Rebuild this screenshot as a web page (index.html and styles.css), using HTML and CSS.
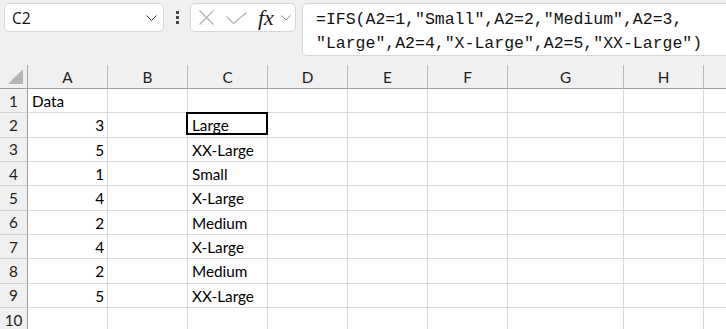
FILE: index.html
```html
<!DOCTYPE html>
<html lang="en">
<head>
    <meta charset="UTF-8">
    <title>IFS</title>
    <link rel="stylesheet" href="styles.css">
</head>
<body>
<div class="toolbar">
    <div class="namebox">
        <span>C2</span>
        <svg width="11" height="6" viewBox="0 0 11 6"><path d="M0.5 0.5 L5.5 5.5 L10.5 0.5" fill="none" stroke="#333" stroke-width="1"/></svg>
    </div>
    <div class="dots"><i></i><i></i><i></i></div>
    <div class="fxbox">
        <svg class="ico-x" width="15" height="15" viewBox="0 0 15 15"><path d="M0.5 0.5 L14.5 14.5 M14.5 0.5 L0.5 14.5" stroke="#b3b3b3" stroke-width="1.2" fill="none"/></svg>
        <svg class="ico-ok" width="21" height="12" viewBox="0 0 21 12"><path d="M0.5 4.5 L7.5 11.5 L20.5 0.5" stroke="#b3b3b3" stroke-width="1.2" fill="none"/></svg>
        <span class="fx">fx</span>
        <svg width="10" height="6" viewBox="0 0 10 6"><path d="M0.5 0.5 L5 5 L9.5 0.5" fill="none" stroke="#888" stroke-width="1"/></svg>
    </div>
    <div class="formula">=IFS(A2=1,"Small",A2=2,"Medium",A2=3,<br>"Large",A2=4,"X-Large",A2=5,"XX-Large")</div>
</div>

<div class="sheet">
    <div class="corner"></div>
    <div class="colhead">A</div><div class="colhead">B</div><div class="colhead">C</div><div class="colhead">D</div>
    <div class="colhead">E</div><div class="colhead">F</div><div class="colhead">G</div><div class="colhead">H</div><div class="colhead"></div>

    <div class="rowhead">1</div>
    <div class="cell">Data</div><div class="cell"></div><div class="cell"></div><div class="cell"></div>
    <div class="cell"></div><div class="cell"></div><div class="cell"></div><div class="cell"></div><div class="cell"></div>

    <div class="rowhead">2</div>
    <div class="cell num">3</div><div class="cell"></div><div class="cell active">Large</div><div class="cell"></div>
    <div class="cell"></div><div class="cell"></div><div class="cell"></div><div class="cell"></div><div class="cell"></div>

    <div class="rowhead">3</div>
    <div class="cell num">5</div><div class="cell"></div><div class="cell">XX-Large</div><div class="cell"></div>
    <div class="cell"></div><div class="cell"></div><div class="cell"></div><div class="cell"></div><div class="cell"></div>

    <div class="rowhead">4</div>
    <div class="cell num">1</div><div class="cell"></div><div class="cell">Small</div><div class="cell"></div>
    <div class="cell"></div><div class="cell"></div><div class="cell"></div><div class="cell"></div><div class="cell"></div>

    <div class="rowhead">5</div>
    <div class="cell num">4</div><div class="cell"></div><div class="cell">X-Large</div><div class="cell"></div>
    <div class="cell"></div><div class="cell"></div><div class="cell"></div><div class="cell"></div><div class="cell"></div>

    <div class="rowhead">6</div>
    <div class="cell num">2</div><div class="cell"></div><div class="cell">Medium</div><div class="cell"></div>
    <div class="cell"></div><div class="cell"></div><div class="cell"></div><div class="cell"></div><div class="cell"></div>

    <div class="rowhead">7</div>
    <div class="cell num">4</div><div class="cell"></div><div class="cell">X-Large</div><div class="cell"></div>
    <div class="cell"></div><div class="cell"></div><div class="cell"></div><div class="cell"></div><div class="cell"></div>

    <div class="rowhead">8</div>
    <div class="cell num">2</div><div class="cell"></div><div class="cell">Medium</div><div class="cell"></div>
    <div class="cell"></div><div class="cell"></div><div class="cell"></div><div class="cell"></div><div class="cell"></div>

    <div class="rowhead">9</div>
    <div class="cell num">5</div><div class="cell"></div><div class="cell">XX-Large</div><div class="cell"></div>
    <div class="cell"></div><div class="cell"></div><div class="cell"></div><div class="cell"></div><div class="cell"></div>

    <div class="rowhead">10</div>
    <div class="cell"></div><div class="cell"></div><div class="cell"></div><div class="cell"></div>
    <div class="cell"></div><div class="cell"></div><div class="cell"></div><div class="cell"></div><div class="cell"></div>
</div>
</body>
</html>
```

FILE: styles.css
```css
body {
    margin: 0;
    background: #f0f0f0;
    overflow: hidden;
    font-family: Lato, "Noto Sans", sans-serif;
    color: #000;
}

/* formula bar */
.toolbar {
    display: flex;
    align-items: flex-start;
    height: 65px;
    padding: 3px 0 0 4px;
    box-sizing: border-box;
}
.namebox, .fxbox, .formula {
    background: #fff;
    border: 1px solid #d6d6d6;
    border-radius: 5px;
    box-sizing: border-box;
}
.namebox {
    width: 160px;
    height: 29px;
    display: flex;
    align-items: center;
    justify-content: space-between;
    padding: 0 6px 0 7px;
    font-family: "Open Sans", sans-serif;
    font-size: 15.5px;
    color: #111;
}
.dots {
    width: 26px;
    display: flex;
    flex-direction: column;
    align-items: center;
    gap: 2px;
    padding-top: 8px;
}
.dots i {
    width: 3px;
    height: 3px;
    background: #444;
}
.fxbox {
    width: 106px;
    height: 29px;
    display: flex;
    align-items: center;
    padding: 0 0 0 8px;
}
.fxbox .ico-ok {
    margin-left: 12px;
}
.fx {
    margin-left: 11px;
    font-family: "Liberation Serif", serif;
    font-style: italic;
    font-size: 22px;
    color: #1a1a1a;
    line-height: 1;
}
.fxbox svg:last-child {
    margin-left: 7px;
}
.formula {
    flex: 1;
    height: 53px;
    margin-left: 6px;
    margin-right: -20px;
    padding: 4px 13px;
    font-family: "Liberation Mono", monospace;
    font-size: 16.5px;
    line-height: 24px;
    white-space: nowrap;
    color: #111;
}

/* grid */
.sheet {
    display: grid;
    grid-template-columns: 28px repeat(6, 80px) 116px 80px 80px;
    grid-template-rows: 24px;
    grid-auto-rows: 24.33px;
    font-size: 15.3px;
}
.corner, .colhead, .rowhead, .cell {
    box-sizing: border-box;
    display: flex;
    align-items: center;
}
.corner {
    justify-content: flex-end;
    align-items: flex-end;
    padding: 0 4px 4px 0;
    border-right: 1px solid #a6a6a6;
    border-bottom: 1px solid #9e9e9e;
}
.corner::before {
    content: "";
    border-left: 15px solid transparent;
    border-bottom: 15px solid #b5b5b5;
}
.colhead {
    justify-content: center;
    border-right: 1px solid #b9b9b9;
    border-bottom: 1px solid #9e9e9e;
    color: #222;
}
.rowhead {
    justify-content: center;
    background: #f0f0f0;
    border-right: 1px solid #9e9e9e;
    border-bottom: 1px solid #d2d2d2;
    color: #222;
}
.cell {
    background: #fff;
    padding: 1px 3px 0 4px;
    border-right: 1px solid #dadada;
    border-bottom: 1px solid #dadada;
}
.num {
    justify-content: flex-end;
}
.active {
    position: relative;
}
.active::after {
    content: "";
    position: absolute;
    left: -2px;
    top: -1px;
    right: -1px;
    bottom: 2px;
    border: 2px solid #000;
}
```
